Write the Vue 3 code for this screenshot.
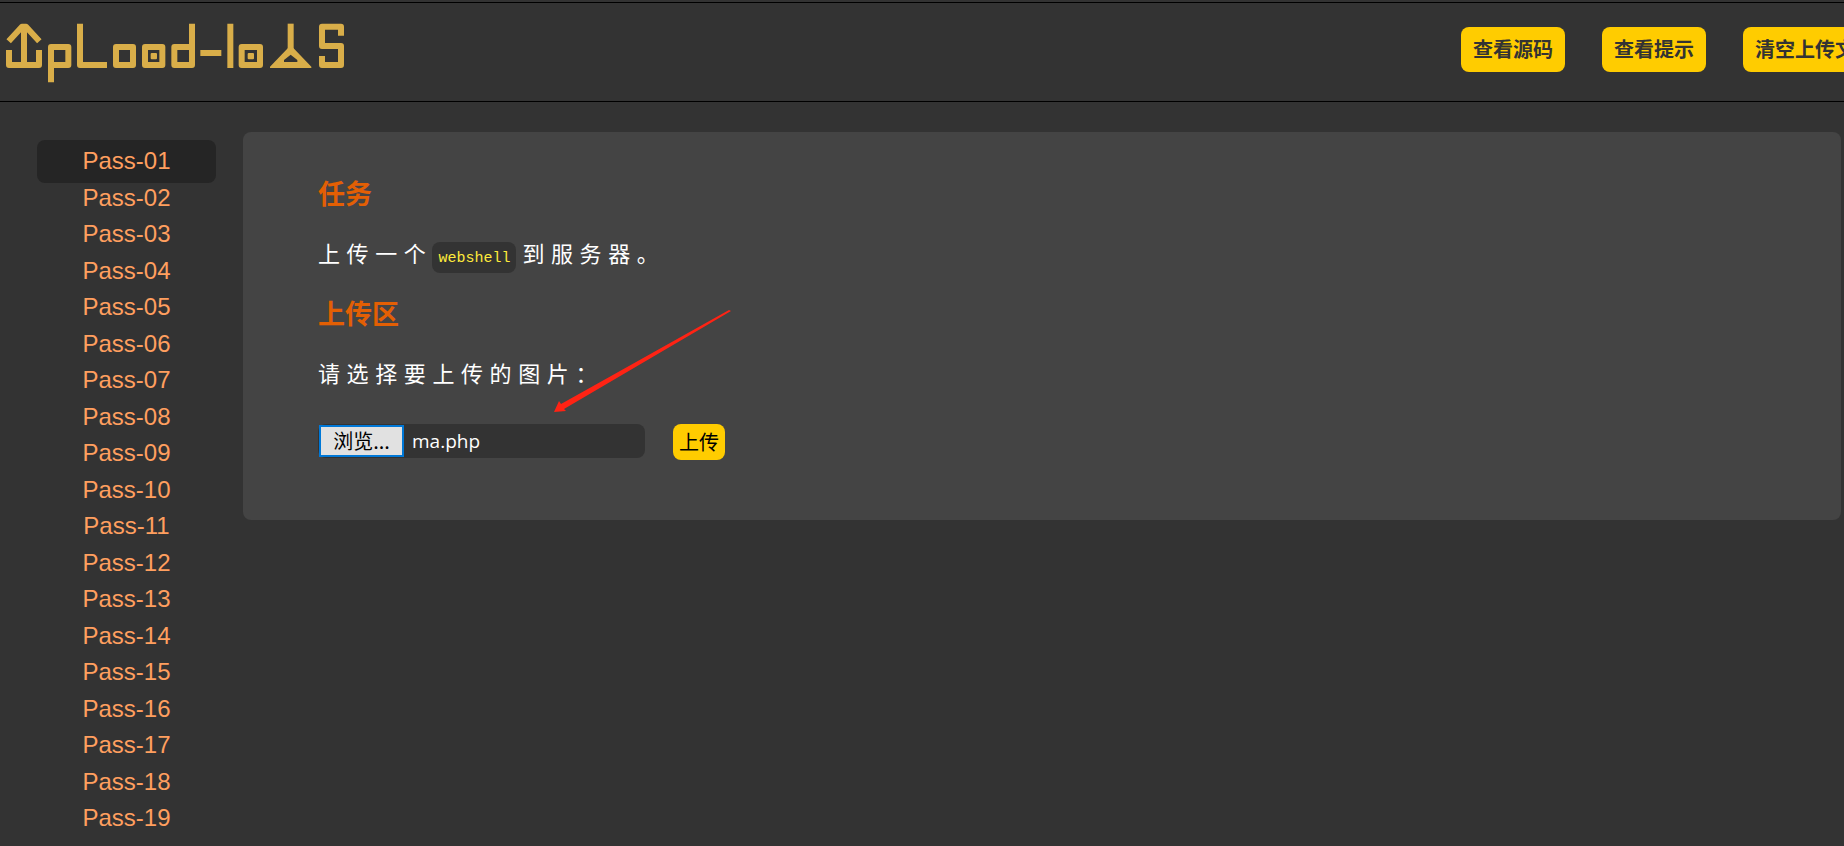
<script setup>
import { ref } from 'vue'

const passes = Array.from({ length: 19 }, (_, i) => 'Pass-' + String(i + 1).padStart(2, '0'))
const current = ref('Pass-01')
const fileName = ref('ma.php')

function pick(event) {
  const file = event.target.files[0]
  if (file) fileName.value = file.name
}
</script>

<template>
  <div class="page">
    <header class="header">
      <a class="logo" href="#" aria-label="Upload-labs">
        <svg viewBox="0 0 1044 252" width="348" height="84" aria-hidden="true">
          <g fill="none" stroke="#d9ae49" stroke-width="18" stroke-linejoin="round">
            <path d="M27 150V195H117V150M72 195V84" />
            <path d="M26 124L66 80H78L118 124" />
            <path d="M153 247V141H205V195H153" />
            <path d="M240 71V195H321" />
            <rect x="348" y="141" width="51" height="54" />
            <rect x="435" y="141" width="52" height="54" />
            <rect x="523" y="141" width="53" height="54" />
            <path d="M576 71V150M601 159H664M691 71V204" />
            <rect x="725" y="141" width="55" height="54" />
            <path d="M872 71V155" />
            <path d="M1023 107V80H966V138H1023V195H966V168" />
          </g>
          <g fill="#d9ae49">
            <rect x="452" y="159" width="19" height="19" rx="3" />
            <rect x="743" y="159" width="19" height="19" rx="3" />
            <path fill-rule="evenodd" d="M864 144H880L934 200V204H810V200ZM872 164L852 180V186H892V180Z" />
          </g>
        </svg>
      </a>
      <nav class="actions">
        <button type="button">查看源码</button>
        <button type="button">查看提示</button>
        <button type="button">清空上传文件</button>
      </nav>
    </header>

    <div class="body">
      <ul class="menu">
        <li v-for="name in passes" :key="name">
          <a href="#" :class="{ active: name === current }" @click.prevent="current = name">{{ name }}</a>
        </li>
      </ul>

      <main class="panel">
        <h3>任务</h3>
        <p>上传一个<code>webshell</code>到服务器。</p>
        <h3>上传区</h3>
        <p id="prompt">请选择要上传的图片：</p>
        <form class="upload" @submit.prevent>
          <label class="picker">
            <input type="file" aria-labelledby="prompt" @change="pick" />
            <span class="browse">浏览...</span>
            <span class="file">{{ fileName }}</span>
          </label>
          <button type="submit">上传</button>
        </form>
        <svg class="arrow" viewBox="0 0 180 104" width="180" height="104" aria-hidden="true">
          <path fill="#ff2314" d="M2 102L7 91L9 94L177 0L179 1L12 99L14 101Z" />
        </svg>
      </main>
    </div>
  </div>
</template>

<style>
html,
body {
  background: #333;
}
</style>

<style scoped>
.page {
  min-height: 100vh;
  box-sizing: border-box;
  padding-top: 2px;
  overflow: hidden;
  background: #333;
  font-family: "Liberation Sans", "Noto Sans CJK SC", sans-serif;
}
.header {
  display: flex;
  justify-content: space-between;
  align-items: flex-start;
  height: 98px;
  border-top: 1px solid #000;
  border-bottom: 1px solid #000;
}
.logo {
  display: block;
  margin-top: -3px;
}
.logo svg {
  display: block;
}
.actions {
  display: flex;
  flex: 0 0 383px;
  gap: 37px;
  padding-top: 24px;
}
button {
  border: 0;
  border-radius: 8px;
  background: #fc0;
  font-family: "Noto Sans CJK SC", sans-serif;
  font-size: 20px;
  cursor: pointer;
}
.actions button {
  flex: none;
  height: 45px;
  padding: 0 12px 2px;
  color: #333;
  font-weight: 700;
}
.body {
  display: flex;
  align-items: flex-start;
  gap: 27px;
  padding: 30px 3px 0 37px;
}
.menu {
  flex: 0 0 179px;
  margin: 8px 0 0;
  padding: 0;
  list-style: none;
  text-align: center;
}
.menu li {
  height: 36px;
}
.menu li:nth-child(odd) {
  height: 37px;
}
.menu a {
  display: block;
  padding: 2px 0 4px;
  border-radius: 8px;
  color: #ff9f5f;
  font-size: 24px;
  line-height: 37px;
  text-decoration: none;
}
.menu a.active {
  background: #252525;
}
.panel {
  position: relative;
  flex: 1;
  display: flex;
  flex-direction: column;
  gap: 24px;
  padding: 45px 75px 60px;
  border-radius: 8px;
  background: #444;
  color: #fff;
}
h3,
p {
  margin: 0;
  line-height: 36px;
}
h3 {
  color: #e35f04;
  font-size: 27px;
}
p {
  font-size: 22px;
  letter-spacing: 0.3em;
}
code {
  padding: 8px 6px 6px;
  border-radius: 8px;
  margin-right: 6px;
  background: #333;
  color: #ffeb3b;
  font-family: "Liberation Mono", monospace;
  font-size: 15px;
  letter-spacing: normal;
  line-height: 1;
}
.upload {
  display: flex;
  align-items: flex-start;
  gap: 28px;
  margin-top: 7px;
}
.upload button {
  height: 36px;
  padding: 0 6px 2px;
  color: #000;
}
.picker {
  position: relative;
  display: flex;
  align-items: center;
  gap: 8px;
  box-sizing: border-box;
  width: 327px;
  height: 34px;
  padding: 1px;
  border-radius: 8px;
  background: #333;
  font-size: 20px;
  cursor: pointer;
}
.picker input {
  position: absolute;
  inset: 0;
  width: 100%;
  opacity: 0;
}
.browse {
  box-sizing: border-box;
  width: 85px;
  height: 32px;
  border: 2px solid #0078d7;
  background: #e1e1e1;
  color: #000;
  font-family: "Noto Sans CJK SC", sans-serif;
  line-height: 28px;
  text-align: center;
}
.file {
  font-family: "Open Sans", sans-serif;
  font-size: 19px;
}
.arrow {
  position: absolute;
  top: 178px;
  left: 309px;
  pointer-events: none;
}
</style>
